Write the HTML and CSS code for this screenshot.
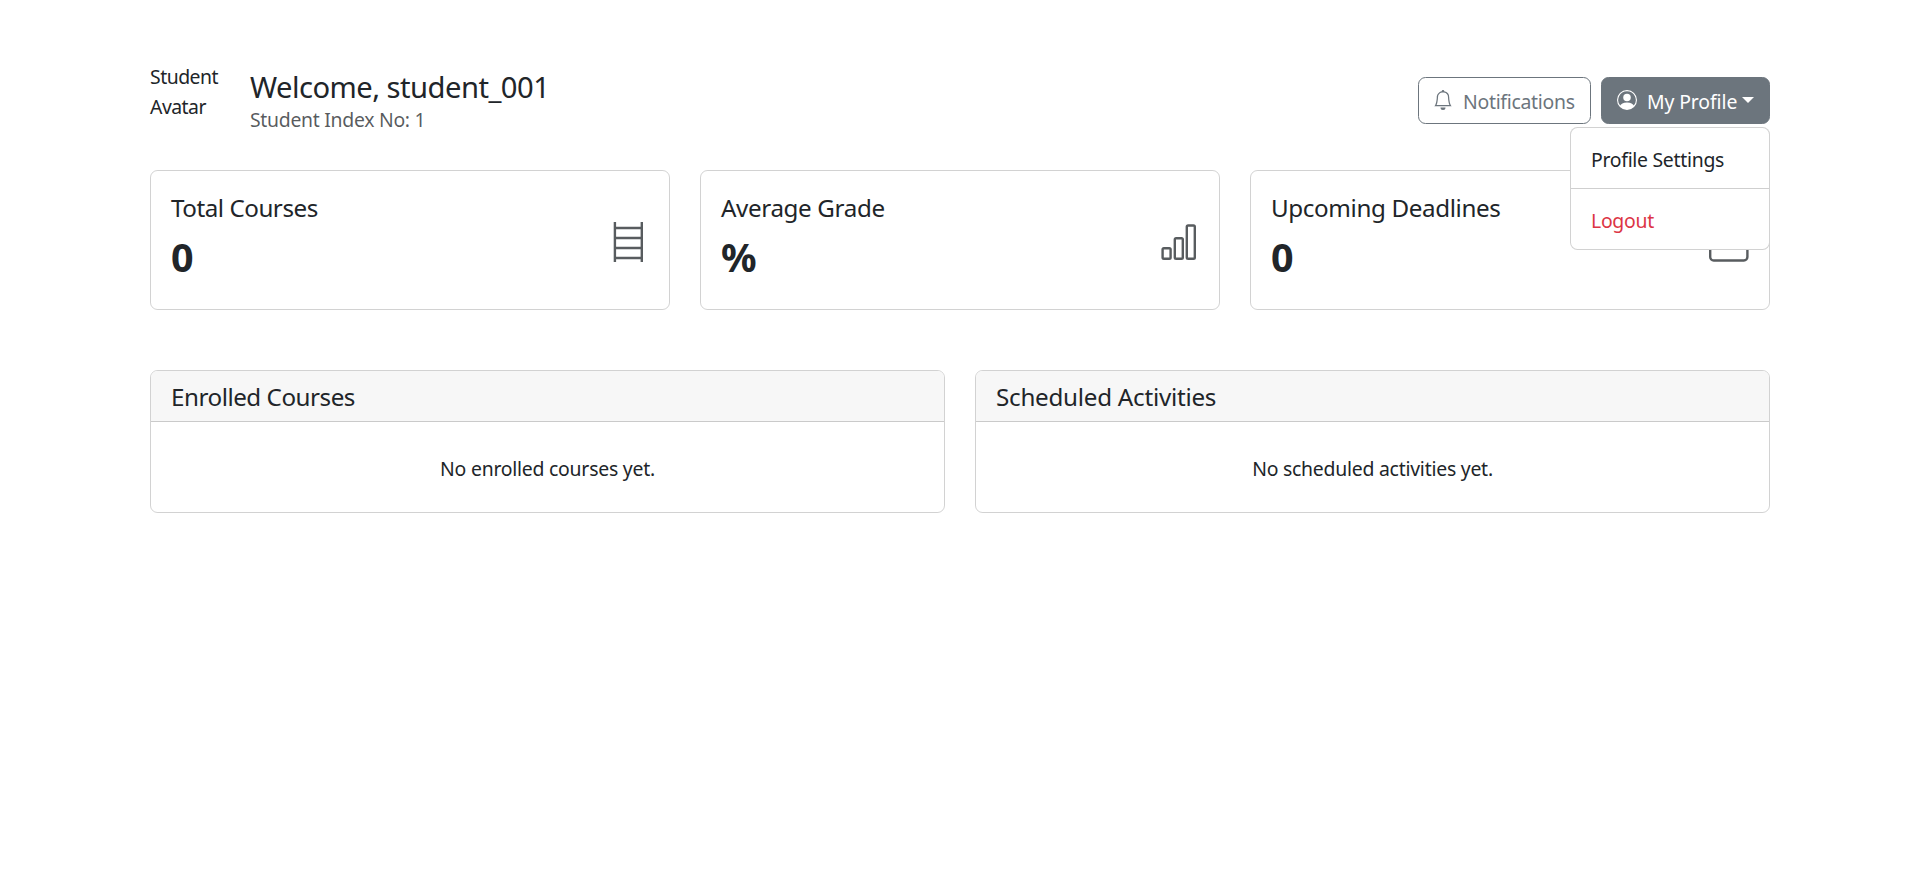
FILE: index.html
```
<!DOCTYPE html>
<html lang="en">
<head>
<meta charset="utf-8">
<title>Student Dashboard</title>
<link rel="stylesheet" href="styles.css">
</head>
<body>
<main class="container">
  <header class="topbar">
    <div class="identity">
      <div class="avatar">Student Avatar</div>
      <div class="who">
        <h4 class="welcome"><span>Welcome, student_001</span></h4>
        <p class="index-no"><span>Student Index No: 1</span></p>
      </div>
    </div>
    <div class="actions">
      <button class="btn btn-outline">
        <svg class="btn-icon" viewBox="0 0 16 16"><path d="M8 16a2 2 0 0 0 2-2H6a2 2 0 0 0 2 2M8 1.918l-.797.161A4 4 0 0 0 4 6c0 .628-.134 2.197-.459 3.742-.16.767-.376 1.566-.663 2.258h10.244c-.287-.692-.502-1.49-.663-2.258C12.134 8.197 12 6.628 12 6a4 4 0 0 0-3.203-3.92zM14.22 12c.223.447.481.801.78 1H1c.299-.199.557-.553.78-1C2.68 10.2 3 6.88 3 6c0-2.42 1.72-4.44 4.005-4.901a1 1 0 1 1 1.99 0A5 5 0 0 1 13 6c0 .88.32 4.2 1.22 6"/></svg>
        <span class="label">Notifications</span>
      </button>
      <div class="dropdown">
        <button class="btn btn-solid">
          <svg class="btn-icon" viewBox="0 0 16 16"><path d="M11 6a3 3 0 1 1-6 0 3 3 0 0 1 6 0"/><path fill-rule="evenodd" d="M0 8a8 8 0 1 1 16 0A8 8 0 0 1 0 8m8-7a7 7 0 0 0-5.468 11.37C3.242 11.226 4.805 10 8 10s4.757 1.225 5.468 2.37A7 7 0 0 0 8 1"/></svg>
          <span class="label">My Profile</span><i class="caret"></i>
        </button>
        <div class="menu">
          <a class="menu-item"><span>Profile Settings</span></a>
          <hr class="menu-divider">
          <a class="menu-item danger"><span>Logout</span></a>
        </div>
      </div>
    </div>
  </header>

  <section class="stats">
    <article class="card stat">
      <div><h5 class="title tight">Total Courses</h5><p class="value">0</p></div>
      <svg class="stat-icon" viewBox="0 0 40 40"><path d="M5.9 0v40M32.8 0v40M6 6h27M6 16h27M6 26h27M6 36h27"/></svg>
    </article>
    <article class="card stat">
      <div><h5 class="title">Average Grade</h5><p class="value">%</p></div>
      <svg class="stat-icon" viewBox="0 0 40 40"><rect x="3.6" y="26.2" width="8" height="10.5" rx="1.3"/><rect x="15.8" y="16.2" width="8" height="20.5" rx="1.3"/><rect x="27.8" y="3.5" width="8" height="33.2" rx="1.3"/></svg>
    </article>
    <article class="card stat">
      <div><h5 class="title">Upcoming Deadlines</h5><p class="value">0</p></div>
      <svg class="stat-icon" viewBox="0 0 40 40"><rect x="1.2" y="3.5" width="37.2" height="35" rx="3.5"/><path d="M1 11h38M9 0v4M31 0v4"/></svg>
    </article>
  </section>

  <section class="panels">
    <article class="card">
      <h5 class="panel-head tight">Enrolled Courses</h5>
      <p class="panel-body"><span>No enrolled courses yet.</span></p>
    </article>
    <article class="card">
      <h5 class="panel-head">Scheduled Activities</h5>
      <p class="panel-body"><span>No scheduled activities yet.</span></p>
    </article>
  </section>
</main>
</body>
</html>
```
FILE: styles.css
```
* { box-sizing: border-box; }
body { margin: 0; background: #fff; color: #212529; font: 19.4px/30px "Noto Sans", "Open Sans", sans-serif; letter-spacing: -0.28px; }
h4, h5, p { margin: 0; font-weight: 400; }
.container { width: 1620px; margin: 0 auto; padding-top: 60px; }
.topbar { display: flex; justify-content: space-between; align-items: center; height: 80px; margin-bottom: 30px; }
.identity { display: flex; align-items: center; gap: 20px; }
.avatar { width: 80px; height: 80px; padding-top: 2px; letter-spacing: -0.5px; }
.who { padding-top: 3px; }
.welcome { font-size: 29.2px; line-height: 36px; letter-spacing: -0.53px; }
.index-no { color: rgba(33, 37, 41, .75); }
.actions { display: flex; gap: 10px; }
.btn { display: flex; align-items: center; height: 47px; padding: 0 15px; border: 1px solid #6c757d; border-radius: 7.5px; font: inherit; letter-spacing: inherit; white-space: nowrap; }
.btn-outline { width: 173px; padding-left: 14px; background: #fff; color: #6c757d; }
.btn-solid { width: 169px; background: #6c757d; color: #fff; }
.btn-icon { width: 20px; height: 20px; margin-right: 10px; fill: currentColor; flex: none; }
.label { padding-top: 3px; }
.caret { margin: 0 0 1px 5px; border: 6px solid transparent; border-top-color: currentColor; border-bottom: 0; }
.btn-solid .label { letter-spacing: -0.1px; }
.dropdown { position: relative; }
.menu { position: absolute; z-index: 2; right: 0; top: 50px; width: 200px; height: 123px; padding: 10px 0; background: #fff; border: 1px solid rgba(0, 0, 0, .175); border-radius: 7.5px; }
.menu-item { display: block; padding: 7px 20px 3px; }
.menu-divider { margin: 10px 0; border: 0; border-top: 1px solid #cfcfcf; }
.danger { color: #dc3545; }
.stats { display: grid; grid-template-columns: repeat(3, 1fr); gap: 30px; margin-bottom: 60px; }
.card { border: 1px solid rgba(0, 0, 0, .175); border-radius: 7.5px; overflow: hidden; }
.stat { display: flex; justify-content: space-between; align-items: center; height: 140px; padding: 23px 20px 19px; }
.title { font-size: 24.2px; line-height: 30px; margin-bottom: 10px; letter-spacing: -0.37px; }
.value { font-size: 39.5px; line-height: 48px; font-weight: 700; margin-bottom: 10px; letter-spacing: -1px; }
.stat-icon { width: 40px; height: 40px; fill: none; stroke: #585c5f; stroke-width: 2.4; }
.panels { display: grid; grid-template-columns: 1fr 1fr; gap: 30px; }
.panel-head { padding: 11px 20px 9px; font-size: 24.2px; line-height: 30px; background: #f7f7f7; border-bottom: 1px solid #cacaca; letter-spacing: -0.25px; }
.panel-head.tight, .title.tight { letter-spacing: -0.47px; }
.panel-body { height: 90px; padding: 32px 20px 28px; text-align: center; letter-spacing: -0.23px; }
```
